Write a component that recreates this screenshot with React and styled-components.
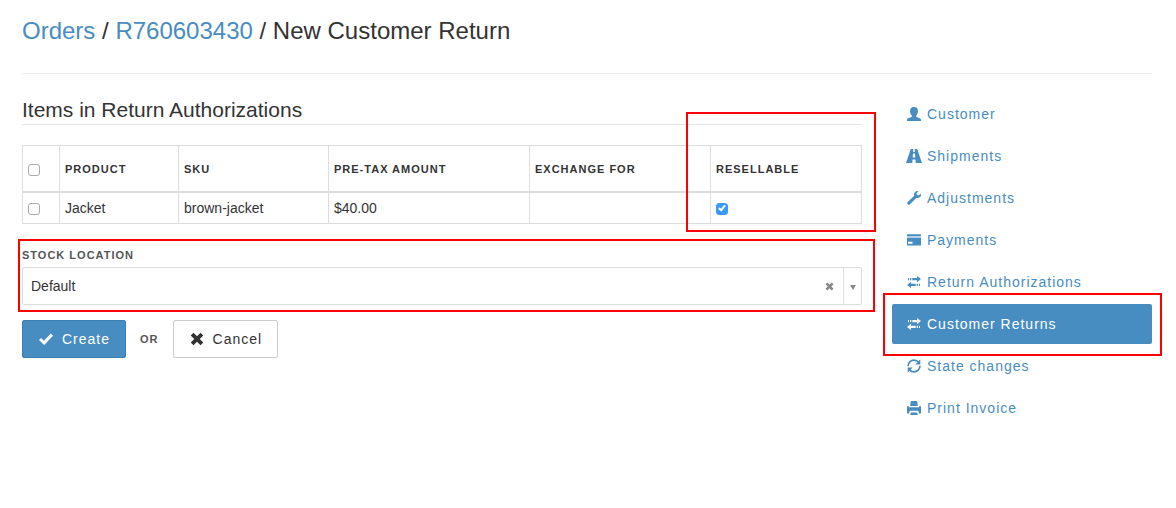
import React, { useState } from "react";
import styled, { createGlobalStyle, css, ThemeProvider } from "styled-components";

const theme = {
  primary: "#488dc2",
  primaryDark: "#3a7fb3",
  text: "#333",
  muted: "#555",
  borderColor: "#ddd",
  highlight: "#f00",
};

const GlobalStyles = createGlobalStyle`
  *, *::before, *::after {
    box-sizing: border-box;
  }
  body {
    margin: 0;
    background-color: #fff;
    color: ${({ theme }) => theme.text};
    font-family: "Liberation Sans", Arial, sans-serif;
    font-size: 14px;
    line-height: 20px;
  }
  a {
    color: ${({ theme }) => theme.primary};
    text-decoration: none;
  }
`;

const Page = styled.div`
  padding: 0 9px 0 7px;
`;

const PageHeader = styled.header`
  margin: 0 15px 20px;
  padding: 16px 0 28px;
  border-bottom: 1px solid #eee;
`;

const Title = styled.h1`
  margin: 0;
  font-size: 24px;
  font-weight: 400;
  line-height: 29px;
`;

const Row = styled.div`
  display: flex;
`;

const Main = styled.main`
  flex: 0 0 75%;
  min-width: 0;
  padding: 4px 15px 0;
`;

const Sidebar = styled.nav`
  flex: 0 0 25%;
  padding: 0 15px;
`;

const Legend = styled.h2`
  margin: 0 0 20px;
  padding-bottom: 2px;
  border-bottom: 1px solid #e5e5e5;
  font-size: 21px;
  font-weight: 400;
  line-height: 24px;
`;

const highlighted = css`
  position: relative;

  &::after {
    content: "";
    position: absolute;
    border: 2px solid ${({ theme }) => theme.highlight};
    pointer-events: none;
  }
`;

const TableWrap = styled.div`
  ${highlighted}
  margin-bottom: 21px;

  &::after {
    top: -33px;
    right: -14px;
    bottom: -8px;
    width: 190px;
  }
`;

const Table = styled.table`
  width: 100%;
  table-layout: fixed;
  border-collapse: collapse;
`;

const Th = styled.th`
  width: ${({ $width }) => $width || "auto"};
  height: 46px;
  padding: 2px 5px 0;
  border: 1px solid ${({ theme }) => theme.borderColor};
  border-bottom-width: 2px;
  font-size: 11px;
  font-weight: 700;
  letter-spacing: 1px;
  text-align: left;
  text-transform: uppercase;
`;

const Td = styled.td`
  height: 31px;
  padding: 5px;
  border: 1px solid ${({ theme }) => theme.borderColor};
`;

const Checkbox = styled.input.attrs({ type: "checkbox" })`
  appearance: none;
  display: block;
  width: 12px;
  height: 12px;
  margin: 2px 0 0;
  border: 1px solid #aaa;
  border-radius: 3px;
  background-color: #fff;

  &:checked {
    border-color: #3b99fc;
    background-color: #3b99fc;
  }
  &:checked::after {
    content: "";
    display: block;
    width: 4px;
    height: 7px;
    margin: 0 0 0 3px;
    border: solid #fff;
    border-width: 0 2px 2px 0;
    transform: rotate(40deg);
  }
`;

const Field = styled.div`
  ${highlighted}
  margin-bottom: 15px;

  &::after {
    top: -6px;
    right: -13px;
    bottom: -7px;
    left: -4px;
  }
`;

const Label = styled.label`
  display: block;
  padding-bottom: 2px;
  color: ${({ theme }) => theme.muted};
  font-size: 11px;
  font-weight: 700;
  letter-spacing: 1px;
  text-transform: uppercase;
`;

const SelectBox = styled.div`
  display: flex;
  height: 38px;
  border: 1px solid ${({ theme }) => theme.borderColor};
  border-radius: 2px;
`;

const Select = styled.select`
  flex: 1;
  appearance: none;
  padding: 0 8px;
  border: 0;
  background: none;
  color: ${({ theme }) => theme.text};
  font: inherit;
`;

const ClearButton = styled.button`
  display: flex;
  align-items: center;
  justify-content: center;
  width: 27px;
  padding: 2px 0 0;
  border: 0;
  background: none;
  color: #888;
`;

const Arrow = styled.span`
  display: flex;
  align-items: center;
  justify-content: center;
  width: 18px;
  padding-top: 4px;
  border-left: 1px solid ${({ theme }) => theme.borderColor};
  color: #888;
`;

const Actions = styled.div`
  display: flex;
  align-items: center;
  gap: 14px;
`;

const Or = styled.span`
  color: ${({ theme }) => theme.muted};
  font-size: 11px;
  font-weight: 700;
  letter-spacing: 1px;
  text-transform: uppercase;
`;

const Button = styled.button`
  display: flex;
  align-items: center;
  gap: 9px;
  height: 38px;
  padding: 0 15px 0 16px;
  border: 1px solid ${({ $primary, theme }) => ($primary ? theme.primaryDark : "#ccc")};
  border-radius: 2px;
  background-color: ${({ $primary, theme }) => ($primary ? theme.primary : "#fff")};
  color: ${({ $primary, theme }) => ($primary ? "#fff" : theme.text)};
  font: inherit;
  letter-spacing: 1px;
`;

const NavList = styled.ul`
  display: flex;
  flex-direction: column;
  gap: 2px;
  margin: 0;
  padding: 0;
  list-style: none;
`;

const NavItem = styled.li`
  ${({ $active }) => $active && highlighted}

  &::after {
    inset: -11px -10px -12px -9px;
  }
`;

const NavLink = styled.a`
  display: flex;
  align-items: center;
  gap: 6px;
  height: 40px;
  padding: 0 15px;
  border-radius: 2px;
  letter-spacing: 1px;
  ${({ $active, theme }) =>
    $active &&
    css`
      background-color: ${theme.primary};
      color: #fff;
    `}
`;

const Svg = styled.svg`
  flex: none;
  overflow: visible;
  fill: currentColor;
`;

const Icon = ({ size = 14, children }) => (
  <Svg width={size} height={size} viewBox="0 0 14 14" aria-hidden="true">
    {children}
  </Svg>
);

const UserIcon = () => (
  <Icon>
    <path d="M7 0C4.400 0 3 1.700 3.100 3.900c0 2 .7 3.500 1.700 4.500v1.400C4.300 10.600 .5 11 .1 12.300L0 14h14l-.1-1.700C13.500 11 9.700 10.600 9.200 9.800V8.400c1-1 1.700-2.500 1.700-4.500C11 1.700 9.600 0 7 0z" />
  </Icon>
);

const RoadIcon = () => (
  <Icon>
    <path
      fillRule="evenodd"
      d="M3.800 0h2.500L6.100 3h1.800L7.700 0h2.500L15 14H8.700l-.2-3.500h-3L5.300 14H-1zM6 4.500l-.3 4h2.600L8 4.500z"
    />
  </Icon>
);

const WrenchIcon = () => (
  <Icon>
    <path d="M11.600.2L9.500 2.300l.4 1.800 1.800.4 2.100-2.100c.5 1.600 0 3-1 3.900-1 .8-2.300 1-3.500.6L3 13.300c-.6.6-1.500.7-2.200.1-.8-.7-.7-1.700-.1-2.300l6.500-6.300C6.800 3.600 7 2.200 8 1.200 9 .1 10.400-.3 11.600.2z" />
  </Icon>
);

const CardIcon = () => (
  <Icon>
    <path
      fillRule="evenodd"
      d="M.5 1.300h13a.5.5 0 0 1 .5.5V3H0V1.800a.5.5 0 0 1 .5-.5zM0 5h14v7a.5.5 0 0 1-.5.5H.5A.5.5 0 0 1 0 12zM1 8.700v2h4.500v-2z"
    />
    <path d="M0 3h14v2H0z" opacity=".4" />
  </Icon>
);

const TransferIcon = () => (
  <Icon>
    <path d="M1 3h1v2.200H1zM3 3h1.300v2.200H3zM5.300 3h4.700V1l4 3.100-4 3.100V5.200H5.300z" />
    <path d="M13 8.800h-1V11h1zM11 8.800H9.700V11H11zM8.700 8.800H4v-2L0 9.900 4 13v-2h4.700z" />
  </Icon>
);

const RefreshIcon = () => (
  <Icon>
    <g fill="none" stroke="currentColor" strokeWidth="1.700">
      <path d="M1 7.200C1 3.800 3.700 1.200 7 1.200c1.900 0 3.500.8 4.600 2.200" />
      <path d="M13 6.800c0 3.400-2.700 6-6 6-1.900 0-3.500-.8-4.600-2.200" />
    </g>
    <path d="M13.300.2v5.200H8.400zM.7 13.800V8.600h4.900z" />
  </Icon>
);

const PrintIcon = () => (
  <Icon>
    <path d="M4.300 0h5.400l.7 1 .4 4H3.200l.4-4z" />
    <path d="M0 5.200h2v1h10v-1h2v7.300h-2l-.8-2.700H2.800L2 12.500H0z" />
    <path d="M3.900 11.500h6.200l.8 2.500H3.100z" />
  </Icon>
);

const OkIcon = () => (
  <Icon>
    <path d="M0 8l2-2.100 3 2.800L11.700 1.500 14 3.700 5.200 13z" />
  </Icon>
);

const RemoveIcon = ({ size }) => (
  <Icon size={size}>
    <path d="M3.500.8L7 4.300 10.500.8 13.300 3.600 9.800 7l3.500 3.400-2.800 2.800L7 9.700l-3.500 3.500L.7 10.400 4.200 7 .7 3.600z" />
  </Icon>
);

const navItems = [
  { label: "Customer", icon: <UserIcon /> },
  { label: "Shipments", icon: <RoadIcon /> },
  { label: "Adjustments", icon: <WrenchIcon /> },
  { label: "Payments", icon: <CardIcon /> },
  { label: "Return Authorizations", icon: <TransferIcon /> },
  { label: "Customer Returns", icon: <TransferIcon />, active: true },
  { label: "State changes", icon: <RefreshIcon /> },
  { label: "Print Invoice", icon: <PrintIcon /> },
];

const ItemsTable = () => {
  const [selected, setSelected] = useState(false);
  const [resellable, setResellable] = useState(true);
  const toggle = () => setSelected(!selected);

  return (
    <TableWrap>
      <Table>
        <thead>
          <tr>
            <Th $width="37px">
              <Checkbox aria-label="Select all items" checked={selected} onChange={toggle} />
            </Th>
            <Th $width="119px">Product</Th>
            <Th $width="150px">SKU</Th>
            <Th $width="201px">Pre-tax amount</Th>
            <Th $width="181px">Exchange for</Th>
            <Th>Resellable</Th>
          </tr>
        </thead>
        <tbody>
          <tr>
            <Td>
              <Checkbox aria-label="Select Jacket" checked={selected} onChange={toggle} />
            </Td>
            <Td>Jacket</Td>
            <Td>brown-jacket</Td>
            <Td>$40.00</Td>
            <Td />
            <Td>
              <Checkbox
                aria-label="Resellable"
                checked={resellable}
                onChange={() => setResellable(!resellable)}
              />
            </Td>
          </tr>
        </tbody>
      </Table>
    </TableWrap>
  );
};

const App = () => {
  const [location, setLocation] = useState("default");

  return (
    <ThemeProvider theme={theme}>
      <GlobalStyles />
      <Page>
        <PageHeader>
          <Title>
            <a href="#orders">Orders</a> / <a href="#order">R760603430</a> / New Customer Return
          </Title>
        </PageHeader>
        <Row>
          <Main>
            <Legend>Items in Return Authorizations</Legend>
            <ItemsTable />
            <Field>
              <Label htmlFor="stock-location">Stock Location</Label>
              <SelectBox>
                <Select
                  id="stock-location"
                  value={location}
                  onChange={(e) => setLocation(e.target.value)}
                >
                  <option value="" />
                  <option value="default">Default</option>
                </Select>
                <ClearButton type="button" aria-label="Clear" onClick={() => setLocation("")}>
                  <RemoveIcon size={9} />
                </ClearButton>
                <Arrow>
                  <Svg width="6" height="5" viewBox="0 0 6 5" aria-hidden="true">
                    <path d="M0 0h6L3 5z" />
                  </Svg>
                </Arrow>
              </SelectBox>
            </Field>
            <Actions>
              <Button type="submit" $primary>
                <OkIcon />
                Create
              </Button>
              <Or>or</Or>
              <Button type="button">
                <RemoveIcon size={14} />
                Cancel
              </Button>
            </Actions>
          </Main>
          <Sidebar>
            <NavList>
              {navItems.map(({ label, icon, active }) => (
                <NavItem key={label} $active={active}>
                  <NavLink href="#" $active={active}>
                    {icon}
                    {label}
                  </NavLink>
                </NavItem>
              ))}
            </NavList>
          </Sidebar>
        </Row>
      </Page>
    </ThemeProvider>
  );
};

export default App;
